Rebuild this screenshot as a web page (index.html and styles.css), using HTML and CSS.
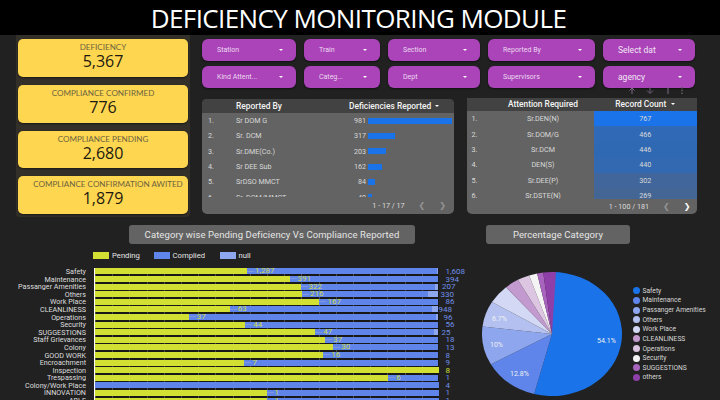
FILE: index.html
```html
<!DOCTYPE html>
<html lang="en">
<head>
    <meta charset="UTF-8">
    <title>Deficiency Monitoring Module</title>
    <link rel="stylesheet" href="styles.css">
</head>
<body>
    <header class="title-bar"><h1>DEFICIENCY MONITORING MODULE</h1></header>

    <div class="top-area">
        <section class="kpi-panel">
            <div class="kpi"><span>DEFICIENCY</span><strong>5,367</strong></div>
            <div class="kpi"><span>COMPLIANCE CONFIRMED</span><strong>776</strong></div>
            <div class="kpi"><span>COMPLIANCE PENDING</span><strong>2,680</strong></div>
            <div class="kpi"><span class="shifted">COMPLIANCE CONFIRMATION AWITED</span><strong>1,879</strong></div>
        </section>

        <div class="main-area">
            <div class="filters">
                <div class="filter">Station<i></i></div>
                <div class="filter">Train<i></i></div>
                <div class="filter">Section<i></i></div>
                <div class="filter">Reported By<i></i></div>
                <div class="filter big">Select dat<i></i></div>
                <div class="filter">Kind Attent...<i></i></div>
                <div class="filter">Categ...<i></i></div>
                <div class="filter">Dept<i></i></div>
                <div class="filter">Supervisors<i></i></div>
                <div class="filter big">agency<i></i></div>
            </div>

            <div class="tables">
                <div class="table-card left-card">
                    <div class="thead">
                        <span class="col-num"></span>
                        <span class="col-name">Reported By</span>
                        <span class="col-metric">Deficiencies Reported<i></i></span>
                    </div>
                    <div class="tbody" id="reportedRows"></div>
                    <div class="pager">1 - 17 / 17<b class="arrow dim">&#10094;</b><b class="arrow dim">&#10095;</b></div>
                </div>
                <div class="table-card right-card">
                    <div class="thead">
                        <span class="col-num"></span>
                        <span class="col-name">Attention Required</span>
                        <span class="col-metric">Record Count<i></i></span>
                    </div>
                    <div class="tbody" id="attentionRows"></div>
                    <div class="pager">1 - 100 / 181<b class="arrow dim">&#10094;</b><b class="arrow">&#10095;</b></div>
                </div>
                <!-- faint chart toolbar sitting over the agency filter -->
                <svg class="table-tools" width="60" height="9" viewBox="0 0 60 9">
                    <path d="M5 8V2M2.5 4.5L5 2L7.5 4.5" fill="none" stroke="#7f6a85"/>
                    <path d="M23 1V7M20 4.5L23 7.5L26 4.5" fill="none" stroke="#6a5a70"/>
                    <path d="M41 1V8" stroke="#7f6a85"/>
                    <path d="M55 1V8" stroke="#5c5c5c" stroke-width="1.5" stroke-dasharray="1.5 1.2"/>
                </svg>
            </div>
        </div>
    </div>

    <div class="bottom-area">
        <section class="bar-section">
            <h2 class="chart-title bar-title">Category wise Pending Deficiency Vs Compliance Reported</h2>
            <div class="legend">
                <span><i class="pending"></i>Pending</span>
                <span class="legend-complied"><i class="complied"></i>Complied</span>
                <span><i class="nullish"></i>null</span>
            </div>
            <div class="bars" id="bars"></div>
        </section>
        <section class="pie-section">
            <h2 class="chart-title pie-title">Percentage Category</h2>
            <div class="pie-wrap">
                <svg class="pie" width="150" height="158" viewBox="0 0 150 158">
                    <g id="slices"></g>
                    <text x="117" y="102">54.1%</text>
                    <text x="30" y="135">12.8%</text>
                    <text x="10" y="106">10%</text>
                    <text x="12" y="80">6.7%</text>
                </svg>
                <ul class="pie-legend" id="pieLegend"></ul>
            </div>
        </section>
    </div>

    <script>
        // table rows
        const reported = [
            ['Sr DOM G', 981, 84], ['Sr. DCM', 317, 27], ['Sr.DME(Co.)', 203, 17.5],
            ['Sr DEE Sub', 162, 14], ['SrDSO MMCT', 84, 7], ['Sr. DOM/MMCT', 40, 3.5]
        ];
        const attention = [
            ['Sr.DEN(N)', 767, '#1a73e8'], ['Sr.DOM/G', 466, '#3069b5'], ['Sr.DCM', 446, '#3069b3'],
            ['DEN(S)', 440, '#3369b1'], ['Sr.DEE(P)', 302, '#41669b'], ['Sr.DSTE(N)', 269, '#446695']
        ];
        document.getElementById('reportedRows').innerHTML = reported.map((r, i) => `
            <div class="row">
                <span class="col-num">${i + 1}.</span>
                <span class="col-name">${r[0]}</span>
                <span class="col-metric"><em>${r[1]}</em><u style="width:${r[2]}px"></u></span>
            </div>`).join('');
        document.getElementById('attentionRows').innerHTML = attention.map((r, i) => `
            <div class="row">
                <span class="col-num">${i + 1}.</span>
                <span class="col-name">${r[0]}</span>
                <span class="col-metric" style="background:${r[2]}">${r[1]}</span>
            </div>`).join('');

        // stacked bars: label, pending %, pending text, null %, total text, total offset
        const rows = [
            ['Safety', 44.3, '1,287', 0.4, '1,608', 7], ['Maintenance', 56.7, '391', 0, '394', 7],
            ['Passanger Amenities', 59.9, '322', 1, '207', 3.5], ['Others', 60.3, '216', 3, '330', 2],
            ['Work Place', 65.4, '167', 0, '86', 7], ['CLEANLINESS', 39.3, '63', 1.8, '948', 0],
            ['Operations', 27.4, '37', 0.7, '96', 5], ['Security', 43.8, '44', 0, '56', 7],
            ['SUGGESTIONS', 64.2, '47', 1.2, '25', 3], ['Staff Grievances', 67.1, '37', 0, '18', 7],
            ['Colony', 69.4, '30', 0, '13', 7], ['GOOD WORK', 66.5, '16', 0, '8', 7],
            ['Encroachment', 43.6, '7', 0, '9', 7], ['Inspection', 100, '', 0, '8', 7],
            ['Trespassing', 85.4, '6', 0, '1', 7], ['Colony/Work Place', 0, '', 0, '4', 7],
            ['INNOVATION', 50, '1', 0, '1', 7], ['ABLE', 50, '1', 0, '1', 7]
        ];
        document.getElementById('bars').innerHTML = rows.map(r => {
            const blue = 100 - r[1] - r[3];
            return `<div class="bar-row">
                <span class="bar-label">${r[0]}</span>
                <div class="track">
                    <div class="seg seg-pending" style="width:${r[1]}%"></div>
                    <div class="seg seg-complied" style="width:${blue}%">${r[2] ? `<span>${r[2]}</span>` : ''}</div>
                    <div class="seg seg-null" style="width:${r[3]}%"></div>
                </div>
                <span class="bar-total${r[1] === 100 ? ' total-pending' : ''}" style="margin-left:${r[5]}px">${r[4]}</span>
            </div>`;
        }).join('');

        // pie chart
        const slices = [
            ['Safety', 54.1, '#1a73e8'], ['Maintenance', 12.8, '#5f85ea'],
            ['Passanger Amenities', 10, '#8ea6ee'], ['Others', 6.7, '#b4c1f0'],
            ['Work Place', 5, '#d3d9f4'], ['CLEANLINESS', 3.3, '#c39ad0'],
            ['Operations', 2.8, '#dcc6e2'], ['Security', 1.9, '#f4f4f4'],
            ['SUGGESTIONS', 1.4, '#a765bd'], ['others', 2.9, '#8e3fa8']
        ];
        let angle = 0;
        const cx = 72, cy = 93, rx = 70, ry = 62;
        document.getElementById('slices').innerHTML = slices.map(s => {
            const a0 = angle * Math.PI / 50;
            angle += s[1];
            const a1 = angle * Math.PI / 50;
            const large = s[1] > 50 ? 1 : 0;
            const x0 = cx + rx * Math.sin(a0), y0 = cy - ry * Math.cos(a0);
            const x1 = cx + rx * Math.sin(a1), y1 = cy - ry * Math.cos(a1);
            return `<path d="M${cx} ${cy}L${x0} ${y0}A${rx} ${ry} 0 ${large} 1 ${x1} ${y1}Z" fill="${s[2]}"/>`;
        }).join('');
        document.getElementById('pieLegend').innerHTML = slices.map(s =>
            `<li><i style="background:${s[2]}"></i>${s[0]}</li>`).join('');
    </script>
</body>
</html>
```

FILE: styles.css
```css
* {
    box-sizing: border-box;
}
body {
    margin: 0;
    width: 720px;
    height: 400px;
    overflow: hidden;
    background-color: #212121;
    color: #fff;
    font-family: Roboto, "Liberation Sans", sans-serif;
}
.title-bar {
    height: 35px;
    background-color: #000;
    display: flex;
    justify-content: center;
    align-items: center;
}
.title-bar h1 {
    margin: 0;
    padding-right: 3px;
    font-family: "Open Sans", sans-serif;
    font-size: 26px;
    font-weight: 400;
    letter-spacing: -0.6px;
    white-space: nowrap;
}
.top-area {
    display: flex;
    height: 182px;
    padding-left: 16px;
}

/* yellow number cards */
.kpi-panel {
    width: 174px;
    height: 182px;
    background-color: #33302a;
    border-radius: 0 0 4px 4px;
    padding: 4px 2px 3px;
    display: flex;
    flex-direction: column;
    gap: 8px;
}
.kpi {
    flex: 1;
    background-color: #ffd64f;
    border-radius: 5px;
    display: flex;
    flex-direction: column;
    align-items: center;
    padding-top: 3px;
    box-shadow: 0 1px 2px rgba(0, 0, 0, 0.5);
    font-family: Lato, sans-serif;
}
.kpi span {
    font-size: 8.1px;
    line-height: 10px;
    color: #6b6440;
    white-space: nowrap;
}
.kpi span.shifted {
    margin-left: 10px;
}
.kpi strong {
    font-family: "Open Sans", sans-serif;
    font-size: 16px;
    line-height: 18px;
    font-weight: 400;
    color: #1c1a10;
}

.main-area {
    flex: 1;
    padding: 4px 0 0 12px;
}

/* filter buttons */
.filters {
    display: grid;
    grid-template-columns: 94px 76px 92px 107px 92px;
    column-gap: 8px;
    row-gap: 5px;
}
.filter {
    height: 22px;
    background-color: #aa44b8;
    border-radius: 6px;
    box-shadow: 0 1px 2px rgba(0, 0, 0, 0.5);
    display: flex;
    align-items: center;
    justify-content: space-between;
    padding: 0 13px 0 15px;
    font-size: 7px;
    color: #ecd8f0;
    white-space: nowrap;
}
.filter.big {
    font-size: 8.5px;
    color: #f3e6f5;
}
.filter i, .col-metric i {
    width: 0;
    height: 0;
    border-left: 2px solid transparent;
    border-right: 2px solid transparent;
    border-top: 2px solid #fff;
}

/* tables */
.tables {
    display: flex;
    margin-top: 11px;
    position: relative;
}
.table-tools {
    position: absolute;
    top: -13px;
    right: 33px;
}
.table-card {
    background-color: #636363;
    border-radius: 5px;
    overflow: hidden;
    display: flex;
    flex-direction: column;
    height: 114.6px;
    font-size: 7.2px;
}
.left-card {
    width: 252px;
}
.right-card {
    width: 230px;
    margin: -1.5px 0 0 12.5px;
    height: 116px;
    border-radius: 0 0 5px 5px;
}
.thead {
    height: 14px;
    flex: none;
    background-color: #424242;
    display: flex;
    align-items: center;
    font-size: 8.4px;
    font-weight: 500;
    color: #f4f4f4;
}
.right-card .thead {
    height: 13.5px;
}
.tbody {
    height: 84px;
    overflow: hidden;
    flex: none;
}
.row {
    height: 15.33px;
    display: flex;
    align-items: center;
    color: #d8d8d8;
}
.left-card .col-num {
    width: 34px;
    padding-left: 6px;
}
.left-card .col-name {
    width: 109px;
}
.left-card .col-metric {
    flex: 1;
    display: flex;
    align-items: center;
    gap: 1px;
}
.left-card .thead .col-metric {
    padding-left: 4px;
    gap: 4px;
}
.left-card .row em {
    width: 22px;
    padding-right: 1px;
    text-align: right;
    font-style: normal;
}
.left-card .row u {
    height: 6px;
    background-color: #1a73e8;
}
.right-card .col-num {
    width: 34px;
    padding-left: 5px;
}
.right-card .col-name {
    width: 85px;
    text-align: center;
    white-space: nowrap;
}
.right-card .col-metric {
    width: 102.5px;
    margin-left: auto;
    align-self: stretch;
    display: flex;
    align-items: center;
    justify-content: center;
    gap: 5px;
}
.right-card .tbody {
    height: 88px;
}
.right-card .row {
    height: 15.4px;
}
.pager {
    flex: 1;
    display: flex;
    align-items: center;
    justify-content: flex-end;
    font-size: 7.2px;
    color: #dcdcdc;
}
.left-card .pager {
    padding: 1px 8px 0 0;
}
.right-card .pager {
    padding-right: 6px;
}
.arrow {
    font-family: "DejaVu Sans", sans-serif;
    font-size: 8px;
    font-weight: 400;
    margin-left: 14px;
    color: #fff;
}
.arrow.dim {
    color: #939393;
}

/* bottom charts */
.bottom-area {
    display: flex;
    height: 183px;
    overflow: hidden;
}
.bar-section {
    width: 480px;
}
.chart-title {
    margin: 0;
    height: 18.5px;
    background-color: #636363;
    border-radius: 3px;
    font-size: 9.5px;
    font-weight: 400;
    letter-spacing: 0.09px;
    color: #e6e6e6;
    display: flex;
    align-items: center;
    justify-content: center;
}
.bar-title {
    width: 286px;
    margin: 8px 0 0 129px;
}
.legend {
    display: flex;
    margin: 8px 0 0 93px;
    font-size: 7.7px;
    color: #e4e4e4;
    height: 8px;
    align-items: center;
}
.legend span {
    display: flex;
    align-items: center;
    width: 60.5px;
}
.legend span.legend-complied {
    width: 66px;
}
.legend i {
    width: 16px;
    height: 7px;
    margin-right: 3px;
}
.pending {
    background-color: #d2e034;
}
.complied {
    background-color: #5f85ea;
}
.nullish {
    background-color: #8ea6ee;
}
.bars {
    margin-top: 8.2px;
}
.bar-row {
    height: 7.6px;
    display: flex;
    align-items: center;
}
.bar-label {
    width: 86px;
    text-align: right;
    font-size: 7.2px;
    color: #dedede;
    white-space: nowrap;
    flex: none;
}
.track {
    width: 345px;
    height: 7.6px;
    margin-left: 7.5px;
    display: flex;
    align-items: center;
    flex: none;
    border-left: 1px solid #fff;
    background-color: #181818;
    background-image: repeating-linear-gradient(90deg, #4c4c4c 0 1px, transparent 1px 17.2px);
}
.seg {
    height: 6px;
}
.seg-pending {
    background-color: #d2e034;
}
.seg-complied {
    background-color: #5f85ea;
    font-size: 8px;
    line-height: 6px;
    color: #cbd94a;
    white-space: nowrap;
}
.seg-complied span::before {
    content: "";
    display: inline-block;
    width: 7px;
    height: 1px;
    margin-right: 1px;
    vertical-align: middle;
    background-color: #8197dc;
}
.seg-null {
    background-color: #8ea6ee;
}
.bar-total {
    font-size: 8px;
    color: #6f8fe8;
}
.total-pending {
    color: #d2e034;
}

/* pie */
.pie-section {
    flex: 1;
}
.pie-title {
    width: 144px;
    margin: 8px 0 0 6px;
}
.pie-wrap {
    display: flex;
    margin-top: -2.5px;
}
.pie {
    flex: none;
}
.pie text {
    font-size: 7px;
    fill: #f0f0f0;
    font-family: Roboto, sans-serif;
}
.pie-legend {
    list-style: none;
    margin: 0;
    padding: 45px 0 0 3px;
    font-size: 6.7px;
    color: #d6d6d6;
    white-space: nowrap;
}
.pie-legend li {
    height: 9.63px;
    display: flex;
    align-items: center;
}
.pie-legend i {
    width: 7px;
    height: 7px;
    border-radius: 50%;
    margin-right: 2.5px;
}
```
